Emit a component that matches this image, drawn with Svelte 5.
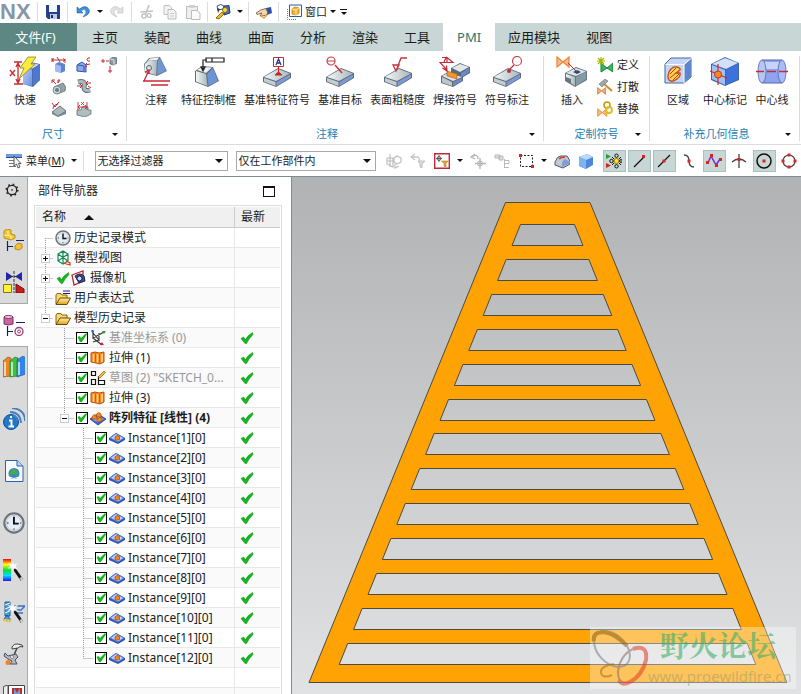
<script>
  // inner markup of every icon, small ones on a 16 grid, big ones on 32
  const slab = '<path d="M2 21L17 12L30 17V22L15 31L2 26Z" fill="#5c6d80"/><path d="M3 21L17 13L29 17.500L15 25Z" fill="url(#metal)"/><path d="M3 22L14.500 26V30L3 25.500Z" fill="#c5cdd0"/><path d="M15.500 26L29 18.500V21.500L15.500 30Z" fill="#7e9ad4"/>'
  const tick = '<path d="M2 8.500L4.500 7L6.500 9.500Q9 5 13.500 2.500L14 4.500Q10 8.500 7.500 13.500H6Z" fill="#12b81c" stroke="#078a16" stroke-width=".5"/>'
  const folder = '<path d="M1 14V5L2 3.500H6L7 5H12V8" fill="#f8d776" stroke="#8a6512"/><path d="M1 14.500L5 8H15.500L12 14.500Z" fill="url(#gold)" stroke="#6b4b0a"/>'
  const clock = '<circle cx="8" cy="8" r="7" fill="#fff" stroke="#6d737b" stroke-width="1.600"/><circle cx="8" cy="8" r="5.500" fill="#e4edf8" stroke="#b5bac2" stroke-width=".6"/><path d="M8 3.500V8.500H11.500" fill="none" stroke="#111" stroke-width="1.400"/><path d="M8 13v-1M3 8h1M12.500 8h.7" stroke="#555"/>'
  const bow = (c) => `<path d="M1 1L7 6L13 1V11L7 6L1 11Z" fill="${c}" fill-opacity=".55" stroke="${c}" stroke-width="1.200"/>`
  const wand = '<path d="M10 8L19 21" stroke="#111" stroke-width="3"/><path d="M17.500 18.500L19.500 21.500" stroke="#ccc" stroke-width="2.400"/><path d="M10 2L11 5.500L15 4L12.500 7.500L15 10L11 9.500L10 13L8.500 9L5 9.500L7.500 7L5 4L9 5Z" fill="#fff" stroke="#ddd" stroke-width=".4"/>'

  const icons = {
    save: '<path d="M1 1H15V15H3L1 13Z" fill="#27408d"/><path d="M4 1H12V8H4Z" fill="#f3f6fb"/><path d="M5 10H12V15H5Z" fill="#bccbe8"/><path d="M6 11H8V14H6Z" fill="#1b2a5c"/>',
    undo: '<path d="M2 3V9H8L6 7Q9 4 11 6.500Q12 9 8 13Q16 10 14 5.500Q11 0 4.500 5Z" fill="#3f8bdc" stroke="#2065ad" stroke-width=".6"/>',
    redo: '<path d="M14 3V9H8L10 7Q7 4 5 6.500Q4 9 8 13Q0 10 2 5.500Q5 0 11.500 5Z" fill="#e2e2e2" stroke="#bcbcbc" stroke-width=".6"/>',
    cut: '<path d="M10 1L6.500 10M1.500 8L14 7" fill="none" stroke="#c3c3c3" stroke-width="1.500"/><circle cx="5" cy="12" r="2.200" fill="none" stroke="#bbb" stroke-width="1.200"/><circle cx="10" cy="11.500" r="2" fill="none" stroke="#bbb" stroke-width="1.200"/>',
    copy: '<path d="M2 1.500H7.500L9.500 3.500V10.500H2Z" fill="#f4f4f4" stroke="#c0c0c0"/><path d="M6 5.500H11.500L14 8V15H6Z" fill="#f4f4f4" stroke="#bbb"/><path d="M8 9.500h4M8 12h4" stroke="#ccc"/>',
    paste: '<path d="M1.500 2.500H12.500V14.500H1.500Z" fill="#efefef" stroke="#bdbdbd"/><path d="M4.500 1H9.500V4H4.500Z" fill="#d0d0d0"/><path d="M6.500 6.500H12L15 9V15.500H6.500Z" fill="#fafafa" stroke="#bbb"/>',
    find: '<path d="M2 2Q6-1 9 2L8 5L3 6Z" fill="#fff" stroke="#2b56a8"/><path d="M9 2L14 1.500L15 9L9 11Z" fill="#3d6fc6" stroke="#1d3d86"/><circle cx="10" cy="6" r="2.500" fill="#ffd843" stroke="#8f6a00"/><path d="M1 14L7 8L9 10L4 15Z" fill="#f1b91e" stroke="#785600" stroke-width=".8"/><path d="M2 4L5 5L3 9Z" fill="#333"/>',
    hand: '<path d="M10 4L15 3L16 9L11 11Z" fill="#2d4fa8"/><path d="M0 9Q5 5 10 4.500L12 9Q10 12 6 12L4 12L6 9L1 10.500Z" fill="#f6d5ac" stroke="#6e5136" stroke-width=".8"/><path d="M5 12L8 14L11 11" fill="none" stroke="#e6a83b" stroke-width="1.500"/>',
    window: '<path d="M1.500 5V15.500H11" fill="none" stroke="#777" stroke-dasharray="1 1"/><path d="M3.500 1H15.500V12.500H3.500Z" fill="#f8fbff" stroke="#2e5ca5"/><path d="M6 5L9 3L13 4V9L10 11L6 10Z" fill="#f8b420" stroke="#9b6500" stroke-width=".6"/><path d="M6 5L10 6V11M10 6L13 4" fill="none" stroke="#fff0b0"/>',

    quick: '<path d="M14 11L21 6L31 8V24L24 31L14 28Z" fill="#4d6ba8"/><path d="M14 12L23 13.500V30L14 28Z" fill="url(#blue)"/><path d="M24 13.500L31 8.500V24L24 30Z" fill="#4d78d0"/><path d="M15 11L21 7L30 8.500L23.500 12.500Z" fill="#cbdaf5"/><path d="M5 6H13M5 28H14M9 7V27M7 11L9 7L11 11M7 23L9 27L11 23M1 14L6 20M6 14L1 20" fill="none" stroke="#c92a30" stroke-width="1.300"/><path d="M19 1H27L22 8H26L10 23L15 12H11Z" fill="#ffeb3b" stroke="#8b8230" stroke-width=".8"/>',
    linear: '<path d="M4 7L8 5L14 7V14L10 16L4 14Z" fill="#5d83cc"/><path d="M4 7L10 9V16L4 14Z" fill="#a2bbf0"/><path d="M1 1V5M14 2V6M1 3H14M3 1.500L1 3L3 4.500M12 1.500L14 3L12 4.500M6 0L9 5" fill="none" stroke="#c92a30"/>',
    angular: '<path d="M1 8L6 5L10 8V15L1 14Z" fill="#8aa9ea" stroke="#2f55ae"/><path d="M2 8L8 9V14" fill="none" stroke="#2f55ae"/><path d="M14 1H12Q10 3 12 4H14M14 7L9 8M11 6L9 8L11 10" fill="none" stroke="#c92a30"/>',
    point: '<path d="M9 2L12 0L16 1V6L13 8L9 7Z" fill="#8e9aa5" stroke="#4f5a65" stroke-width=".7"/><path d="M9 2L13 3V8" fill="none" stroke="#fff" stroke-width=".7"/><path d="M1 3H3V5H1ZM5 4H8M9 9V12M8 13H10V15H8Z" fill="none" stroke="#c92a30"/>',
    cylinder: '<path d="M3 8L12 4Q16 7 14 12L6 15Z" fill="#93a4a9" stroke="#596b72" stroke-width=".7"/><circle cx="6" cy="11" r="4" fill="#c9d5d7" stroke="#596b72" stroke-width=".7"/><circle cx="6" cy="11" r="2" fill="#687b82"/><path d="M1 1L5 5M1 4V1H4M7 1H9L7 4Z" fill="none" stroke="#c92a30"/>',
    curve: '<path d="M2 3Q10 1 8 8Q8 13 14 11" fill="none" stroke="#60727b" stroke-width="5"/><path d="M2 3Q10 1 8 8Q8 13 14 11" fill="none" stroke="#a9babf" stroke-width="3"/><path d="M1 7H6M4 5L6 7L4 9M15 4H10M12 2L10 4L12 6M12 7L15 9" fill="none" stroke="#c92a30"/>',
    chamfer: '<path d="M1 11L9 5L15 10L7 15Z" fill="#aab7bb" stroke="#65747b"/><path d="M1 11L7 15L15 10V13L7 16L1 13Z" fill="#78888f"/><path d="M1 2L4 6L8 1M2 8Q2 4 7 3" fill="none" stroke="#c92a30"/>',
    thickness: '<path d="M1 9H5Q5 5 9 5Q13 5 12 9H15V13L9 16L1 14Z" fill="#b0bdc1" stroke="#62727a" stroke-width=".8"/><path d="M2 1V9M11 1V9M2 6H11M4 4L2 6L4 8M9 4L11 6L9 8M5 1L8 4M8 1L5 4" fill="none" stroke="#c92a30" stroke-width=".9"/>',

    note: '<path d="M4 8L9 2L20 1L27 15L17 20L5 17Z" fill="#677889"/><path d="M5 8L10 4L17 5L16 19L5 16Z" fill="url(#metal)"/><path d="M18 5L20 2L26 14.500L17 19Z" fill="#7197d3"/><path d="M6 7L10 2.500L19 1.500L17 4.500L10 4Z" fill="#edf1f1"/><circle cx="9" cy="12" r="2.500" fill="#d7e5e4" stroke="#526571"/><path d="M9 14L4 25H8M3 25H30M11 29H28M5 16L9 14V18" fill="none" stroke="#cc2730" stroke-width="1.300"/>',
    frame: '<path d="M2 15L9 10L20 11L26 25L15 31L2 26Z" fill="#5b6c7d"/><path d="M3 15L13 18L14.500 30L3 25.500Z" fill="url(#metal)"/><path d="M14 18L20 12L25 25L15.500 30Z" fill="#6d94d5"/><path d="M4 14L9 11L19 11.500L13 17Z" fill="#eef1f1"/><path d="M10 15V4H14M13 2H31V6H13ZM19 2V6M8 11L10 15L12 11Z" fill="none" stroke="#222" stroke-width="1.200"/>',
    datum: slab + '<path d="M12.500 1.500H22.500V10.500H12.500Z" fill="#fff" stroke="#c22c38"/><path d="M15 9L17.500 3L20 9M16 7H19" fill="none" stroke="#352f86" stroke-width="1.300"/><path d="M17.500 11V17M14 19H21L17.500 16Z" fill="#c22" stroke="#c22"/>',
    target: slab + '<path d="M11 9L18 17" stroke="#d32c30" stroke-width="1.500"/><circle cx="7" cy="5" r="4" fill="#fff" stroke="#c94248" stroke-width="1.200"/><path d="M3 5H11" stroke="#c94248"/>',
    rough: slab + '<path d="M11 9H17L14 15ZM14 15L19 2H25" fill="none" stroke="#c3343a" stroke-width="1.300"/>',
    weld: '<path d="M12 12L21 7L31 11V17L21 23L12 18Z" fill="#596b7b"/><path d="M13 12L21 8L30 11L21 16Z" fill="#e2e7e8"/><path d="M22 17L30 12V16L22 22Z" fill="#6b8ac5"/><path d="M2 20L9 16L24 21V25L14 31L2 27Z" fill="#596b7b"/><path d="M3 20L9 17L23 21L14 25Z" fill="#dfe5e6"/><path d="M3 21L13 26V30L3 26.500Z" fill="#bdc7ca"/><path d="M14 26L23 22V25L14 30Z" fill="#6b8ac5"/><path d="M8 15L18 18L18 23L8 20Z" fill="#f79331" stroke="#b65a10" stroke-width=".6"/><path d="M3 1.500H7L5 6M8 6.500V1.500L14 6.500H1L8 14M3.500 12L8 15L7.500 9.500" fill="none" stroke="#c22c38" stroke-width="1.200"/>',
    balloon: slab + '<circle cx="26" cy="5" r="4.500" fill="#fff" stroke="#c94248" stroke-width="1.200"/><path d="M23 9L18 14" stroke="#c22c38" stroke-width="1.300"/><circle cx="18" cy="15" r="2" fill="#c22c38"/>',
    insert: bow('#ee8430') + '<path d="M9 17L20 11L31 15V24L19 31L9 25Z" fill="#67767e"/><path d="M10 17L20 12L30 15.500L20 20Z" fill="#dfe6e7"/><path d="M10 18L19 21V30L15 27V23L10 21Z" fill="url(#metal)"/><path d="M20 21L30 16V23L20 30Z" fill="#849ba5"/><path d="M17 16L21 14L25 16L21 18Z" fill="#234a7c"/><path d="M12 7L21 16" stroke="#c22c38"/>',
    define: '<g transform="translate(3 5)"><path d="M1 1L7 6L13 1V10L7 6L1 10Z" fill="#36b85c" stroke="#19833c"/></g><path d="M4 0V8M0 4H8M1 1L7 7M7 1L1 7" stroke="#a7b900" stroke-width="1.200"/>',
    break: '<g transform="translate(0 8) scale(.65)">' + bow('#e76d1c') + '</g><path d="M6 4L15 12" stroke="#d98a22" stroke-width="2"/><path d="M2 5L8 0L11 2L5 8Z" fill="#9ba7ac" stroke="#68757b" stroke-width=".6"/>',
    replace: '<g transform="translate(0 7) scale(.75)">' + bow('#ec8a1d') + '</g><circle cx="10" cy="4" r="3" fill="none" stroke="#c49a0c" stroke-width="1.600"/><circle cx="12" cy="9" r="3" fill="none" stroke="#e0bb24" stroke-width="1.800"/>',
    region: '<path d="M3 8L9 2H29V21L22 27H3Z" fill="#c5d5f5" stroke="#45669f"/><path d="M22 9L29 2V21L22 27Z" fill="#5e86d0"/><path d="M3.500 8.500H22V27M22 8.500L29 2.500" fill="none" stroke="#fff"/><path d="M7 16Q10 10 15 11Q19 12 18 14L14 17H18Q19 20 15 23Q10 27 7 24Q5 21 7 16Z" fill="#f9d34e" stroke="#c8451f" stroke-width="1.300"/><path d="M8 18L14 12M8 22L14 17M11 24L17 18" stroke="#c43821"/>',
    center: '<path d="M2 8L16 1L30 7V24L16 30L2 24Z" fill="#3e62ae"/><path d="M3 8L16 2L29 7L17 13Z" fill="#d3e0f8"/><path d="M3 9L16 14V29L3 23Z" fill="#a6bff2"/><path d="M17 14L29 8V23L17 29Z" fill="#3b72dd"/><path d="M1 15L18 22M9 8V29" stroke="#d0282c" stroke-width="1.200"/><circle cx="9" cy="18.500" r="3.500" fill="#f7842b" stroke="#b9400b"/>',
    axis: '<path d="M6 4H26V27H6Z" fill="#8fa3ee"/><path d="M6 4H26M6 27H26" stroke="#5467ac"/><path d="M6 6H26V13H6Z" fill="#dfe6ff" opacity=".7"/><ellipse cx="6" cy="15.500" rx="4" ry="11.500" fill="#b7c6f5" stroke="#5265a6" stroke-width=".8"/><ellipse cx="26" cy="15.500" rx="4" ry="11.500" fill="#aabcf7" stroke="#5265a6" stroke-width=".8"/><path d="M0 15.500H8M11 15.500H20M23 15.500H32" stroke="#c22c38" stroke-width="1.400"/>',

    menu: '<path d="M0 1H16V4H0Z" fill="#6e9be6"/><path d="M0 4.500H16" stroke="#2e4f8f"/><path d="M3 7.500H10M3 10.500H10M3 13.500H10" stroke="#777"/><path d="M8 3V13L10.500 11L12 15L14 14L12.500 10.500H15Z" fill="#f5f5f5" stroke="#333" stroke-width=".8"/>',
    geo: '<path d="M1 5H7V14L1 11ZM4 1V14M1 8H8M8 5L11 3L15 5V9L11 11L8 9ZM9 11V15L13 13" fill="none" stroke="#bdbdbd" stroke-width="1.200"/>',
    back: '<path d="M5 1L1 4L5 7M1 4H8Q10 5 9 8" fill="none" stroke="#c6c6c6" stroke-width="1.300"/><path d="M8 8H15L12 11V15L10 14V11Z" fill="#ddd" stroke="#c0c0c0"/>',
    filter: '<path d="M.7.7H15.300V15.300H.7Z" fill="#fff" stroke="#c4283a" stroke-width="1.400"/><path d="M5 2V9M2 5.500H8" stroke="#444" stroke-width=".8"/><circle cx="5" cy="5.500" r="2" fill="none" stroke="#444" stroke-width=".8"/><path d="M7.500 8H14L12 10.500V14L10 13V10.500Z" fill="#eda52d" stroke="#a86a10" stroke-width=".5"/>',
    undoSel: '<path d="M5 1L1 4L5 6M1 4Q8 0 8 6M10 5V16M5 10.500H16" fill="none" stroke="#b3b3b3" stroke-width="1.300"/><circle cx="10" cy="10.500" r="2.500" fill="none" stroke="#b3b3b3"/>',
    tree: '<path d="M1 2H6V5H1ZM5 3H9V7H5Z" fill="#ddd" stroke="#b9b9b9"/><path d="M10.500 6V15M10.500 7.500H15V10.500H10.500M10.500 14.500H15" fill="none" stroke="#b9b9b9"/>',
    marquee: '<path d="M2.500 2.500H14.500V13.500H2.500Z" fill="none" stroke="#222" stroke-dasharray="2 1.500"/><path d="M1 1H4V4H1ZM13 12H16V15H13Z" fill="#d22"/>',
    shell: '<path d="M1 9Q3 3 7 3H13L16 8V11L9 15L1 12Z" fill="#c3cad1" stroke="#4f5863"/><path d="M8 14Q7 8 11 6L15.500 8.500V10.500Z" fill="#7e9ed8"/><path d="M5 6Q7 4 11 4" fill="none" stroke="#d9363b" stroke-width="1.500"/>',
    box: '<path d="M1 4L9 1L15 4V12L8 16L1 13Z" fill="#4b87dc"/><path d="M1 4L9 1L15 4L8 7Z" fill="#b8dcf6"/><path d="M1 4L8 7V16L1 13Z" fill="#7db3ee"/>',
    snap: '<path d="M0 1L5 3.500L0 6Z" fill="#17a431"/><path d="M0 10L5 12.500L0 15Z" fill="#d3221b"/><circle cx="10.500" cy="8" r="2.500" fill="#ffe224" stroke="#9c7300"/><circle cx="10.500" cy="2.700" r="1.700" fill="none" stroke="#111"/><circle cx="10.500" cy="13.300" r="1.700" fill="none" stroke="#111"/><circle cx="5.500" cy="8" r="1.700" fill="none" stroke="#111"/><circle cx="15" cy="8" r="1.400" fill="none" stroke="#111"/><path d="M6 4l2 2M13 10l2 2M15 4l-2 2M6 12l2-2" stroke="#111"/>',
    endpoint: '<path d="M3 14L13 4" stroke="#111" stroke-width="1.300"/><path d="M11 2H14V5H11Z" fill="#d22"/>',
    midpoint: '<path d="M2 14L14 2" stroke="#111" stroke-width="1.300"/><path d="M6.500 6.500H9.500V9.500H6.500Z" fill="#d22"/>',
    control: '<path d="M3 2Q8 2 8 8Q8 14 13 14" fill="none" stroke="#444" stroke-width="1.300"/><path d="M6.500 6.500H9.500V9.500H6.500Z" fill="#d22"/>',
    spline: '<path d="M2 10L5 3L10 12L14 6" fill="none" stroke="#7b2ad0" stroke-width="1.500"/><path d="M0 8H3V11H0ZM4 1H7V4H4ZM9 11H12V14H9ZM13 5H16V8H13Z" fill="#d22"/>',
    cross: '<path d="M8 1V15M1 9Q8 3 15 9" fill="none" stroke="#444" stroke-width="1.300"/><path d="M6.500 5H9.500V8H6.500Z" fill="#d22"/>',
    arc: '<circle cx="8" cy="8" r="7" fill="none" stroke="#111" stroke-width="1.500"/><path d="M6.500 6.500H9.500V9.500H6.500Z" fill="#d22"/>',
    quadrant: '<circle cx="8" cy="8" r="6" fill="none" stroke="#444" stroke-width="1.200"/><path d="M6.500.5H9.500V3.500H6.500ZM6.500 12.500H9.500V15.500H6.500ZM.5 6.500H3.500V9.500H.5ZM12.500 6.500H15.500V9.500H12.500Z" fill="#d22"/>',

    gear: '<circle cx="11" cy="11" r="4.700" fill="none" stroke="#222" stroke-width="1.300"/><circle cx="11" cy="11" r="5.700" fill="none" stroke="#222" stroke-width="1.600" stroke-dasharray="1.600 2.877"/><circle cx="11" cy="11" r=".8"/>',
    assembly: '<path d="M1 2L4 0L8 1V5L12 6V9L8 11L1 9Z" fill="#f7c633" stroke="#ad7c08" stroke-width=".8"/><path d="M1 6L8 7M5 2V7M8 7V10" stroke="#fff2a8"/><path d="M4.500 12V22M4.500 17.500H10M13 11.500H21" stroke="#14206a" stroke-width="1.200"/><path d="M12 17L15 14L19 15V19L16 21L12 20Z" fill="#f7bf32" stroke="#ad7c08" stroke-width=".8"/>',
    constraint: '<path d="M3 1L10 5.500L3 10ZM19 1L12 5.500L19 10Z" fill="#1b25c4"/><path d="M11 0V22M3 5.500H19" stroke="#333" stroke-dasharray="3 1"/><path d="M.5 13.500H8.500V21.500H.5Z" fill="#fff136" stroke="#86740d"/><path d="M13 13L21 18V22H13Z" fill="#c51d1d" stroke="#77100f"/>',
    navigator: '<path d="M1 3V10Q5 12 10 10V3Z" fill="#c866a4" stroke="#833064"/><ellipse cx="5.500" cy="3" rx="4.500" ry="1.500" fill="#f1c6df" stroke="#833064"/><path d="M4.500 12V22M4.500 17.500H10M13 8.500H22" stroke="#14206a" stroke-width="1.200"/><circle cx="16" cy="17.500" r="4" fill="#fff" stroke="#9a3a78" stroke-width="1.300"/><circle cx="16" cy="17.500" r="1.500" fill="none" stroke="#9a3a78"/>',
    books: '<path d="M0 5L5 1L8 2V20L0 21Z" fill="#e98428" stroke="#8c4410" stroke-width=".6"/><path d="M7 5L12 1L15 2V20L7 21Z" fill="#3fc13f" stroke="#17721b" stroke-width=".6"/><path d="M14 4L20 0L23 2V18L14 21Z" fill="#2f86e8" stroke="#124e98" stroke-width=".6"/><path d="M1 6H3V20H1ZM8 6H10V20H8ZM15 6H17V19H15Z" fill="#fff" opacity=".65"/>',
    info: '<circle cx="8" cy="14" r="7.500" fill="#2178c9" stroke="#0b529d"/><path d="M8 8V10M6 12.500H8.500V18M5.500 18.500H11" fill="none" stroke="#fff" stroke-width="2"/><path d="M7 4Q17 4 18 15M9 0Q22 1 22 13M10 7Q14 9 14 13" fill="none" stroke="#467dbd" stroke-width="1.800"/>',
    web: '<path d="M2.500.5H14L20 6V21.500H2.500Z" fill="#f6faff" stroke="#2a62ac"/><path d="M14 .5V6H20" fill="#b9d2f0" stroke="#2a62ac"/><circle cx="11" cy="13.500" r="5.500" fill="#3d81cf"/><path d="M7 14Q8 9 11 9L15 12L13 16L11 13L8 17Z" fill="#48ae42"/><path d="M6 17Q11 20 16 17" stroke="#fff" fill="none"/>',
    history: '<g transform="scale(1.37)">' + clock + '</g>',
    render: '<path d="M0 0H8V22H0Z" fill="url(#rainbow)"/>' + wand,
    studio: '<path d="M2 1H7V15H2ZM1 18L4 14L8 19" fill="#4a9bdc" stroke="#1c6198"/><path d="M2 4L7 2M2 8L7 6M2 12L7 10" stroke="#fff"/><path d="M11 5H22L18 9H11M13 12H20" fill="none" stroke="#3a72bd" stroke-width="1.300"/><path d="M0 18L2 20M4 21V18M8 18L6 21" stroke="#ebb419" stroke-width="1.500"/>' + wand,
    robot: '<path d="M9 4Q11 0 15 1L19 2L20 4L17 3.500L15 5L9 6Z" fill="#eee" stroke="#444"/><path d="M14 5L11 12" stroke="#444" stroke-width="1.500"/><path d="M2 10L5 13L9 12L13 11L15 14L12 17L14 21H7L9 18L5 16L1 13Z" fill="#b3bac6" stroke="#4c5160"/><circle cx="9" cy="14" r="1.500" fill="#fff" stroke="#555" stroke-width=".6"/><circle cx="5" cy="19.500" r="2.500" fill="#ee8425"/>',
    report: '<path d="M.5 1.500L5 0V22H.5Z" fill="#eee" stroke="#555"/><path d="M5.500.5H21.500V22H5.500Z" fill="#fff" stroke="#444"/><path d="M9 3H19V22H9Z" fill="#c22b2b"/><path d="M11 3L14 8L17 3V22H11Z" fill="#5aa8de"/>',

    clock,
    views: '<path d="M3 4L8 1L13 4V11L8 14L3 11ZM3 4L13 11M13 4L3 11M8 1V14" fill="none" stroke="#128a56" stroke-width="1.200"/><path d="M8 13L15 15V13L11 11" fill="none" stroke="#d0461a" stroke-width="1.300"/>',
    tick,
    camera: '<path d="M1 5L12 1V11L3 15Z" fill="#fff" stroke="#c4252c" stroke-width="1.300"/><path d="M4 6Q9 2 13 6L14 11L8 13Z" fill="#3e5190" stroke="#1d2343"/><circle cx="8.500" cy="8.500" r="2.500" fill="#c9dafc" stroke="#101a43"/>',
    expression: folder + '<path d="M8 1H15M8 3.500H15" stroke="#20208a"/>',
    folder,
    csys: '<path d="M3 1V8L14 2M3 8L12 15M3 3L9 10V3M9 10L3 12Z" fill="none" stroke="#333" stroke-width="1.100"/><path d="M1 1H4M2.500 0V3" stroke="#2e5bd0" stroke-width="1.200"/><path d="M12 1L16 1L14 4Z" fill="#1da53a"/><path d="M10 15H14L12 12Z" fill="#d22"/>',
    extrude: '<path d="M1 3L5 2L9 3L14 2V12L10 14L6 13L1 12Z" fill="#f58a1f" stroke="#b8500c"/><path d="M3.500 4V12M7.500 4V12.500M12 4V12" stroke="#ffd98a" stroke-width="1.500"/><path d="M5.500 3.500V12.500M9.500 4V13" stroke="#c95f12"/>',
    sketch: '<path d="M1.500 1.500H5.500V5.500H1.500ZM1.500 9.500H5.500V14.500H1.500ZM8.500 6V14.500H14.500V10.500H9" fill="none" stroke="#111" stroke-width="1.200"/><path d="M8 7L14 1L15.500 2.500L10 8Z" fill="#f2b93b" stroke="#7a4d00" stroke-width=".6"/>',
    pattern: '<path d="M0 9L8 4L16 9L8 15Z" fill="#3c64c9" stroke="#203f96" stroke-width=".8"/><path d="M2 9L8 5.500L14 9L8 12.500Z" fill="#9ab6f4"/><path d="M2 7Q4 3 7 6L7 9L2 9ZM6 5Q8 1 11 4V7L6 7ZM7 10Q9 6 12 8V11L7 12Z" fill="#f08e24" stroke="#a2450b" stroke-width=".7"/>',
    instance: '<path d="M0 8L7 3L16 8V10L9 14L0 10Z" fill="#2c56b8"/><path d="M1 8L7 3.500L15 8L9 12Z" fill="#b9cdf8" stroke="#4a74d6"/><path d="M6 9.500V7Q8 4 10.500 6.500V9.500Q8 11 6 9.500Z" fill="#f0861c" stroke="#a2450b" stroke-width=".7"/>',
  }

  const tabs = ['主页', '装配', '曲线', '曲面', '分析', '渲染', '工具', 'PMI', '应用模块', '视图']
  const dims = ['linear', 'angular', 'point', 'cylinder', 'curve', '', 'chamfer', 'thickness']
  const notes = [
    ['note', '注释'],
    ['frame', '特征控制框'],
    ['datum', '基准特征符号'],
    ['target', '基准目标'],
    ['rough', '表面粗糙度'],
    ['weld', '焊接符号'],
    ['balloon', '符号标注'],
  ]
  const symbols = [['define', '定义'], ['break', '打散'], ['replace', '替换']]
  const geometry = [['region', '区域'], ['center', '中心标记'], ['axis', '中心线']]

  const snaps = ['snap', 'endpoint', 'midpoint', 'control', 'spline', 'cross', 'arc', 'quadrant']
  const snapsOn = ['snap', 'endpoint', 'midpoint', 'spline', 'arc']

  const resources = ['gear', 'assembly', 'constraint', 'navigator', 'books', 'info', 'web', 'history', 'render', 'studio', 'robot', 'report']

  let rows = [
    { level: 0, icon: 'clock', text: '历史记录模式', first: true },
    { level: 0, icon: 'views', text: '模型视图', toggle: '+' },
    { level: 0, icon: 'camera', text: '摄像机', toggle: '+', mark: true },
    { level: 0, icon: 'expression', text: '用户表达式' },
    { level: 0, icon: 'folder', text: '模型历史记录', toggle: '-', last: true },
    { level: 1, icon: 'csys', text: '基准坐标系 (0)', dim: true },
    { level: 1, icon: 'extrude', text: '拉伸 (1)' },
    { level: 1, icon: 'sketch', text: '草图 (2) "SKETCH_0...', dim: true },
    { level: 1, icon: 'extrude', text: '拉伸 (3)' },
    { level: 1, icon: 'pattern', text: '阵列特征 [线性] (4)', toggle: '-', bold: true, last: true },
  ]
  for (let i = 1; i <= 12; i++) {
    rows.push({ level: 2, icon: 'instance', text: `Instance[${i}][0]`, last: i == 12 })
  }

  const guideWidths = [17, 38, 57]

  // ladder openings, each one lower and wider than the one above
  const holes = Array.from({ length: 13 }, (_, i) => {
    const y = Math.round(224 + i * 34.9) + 0.5
    const l = 512 - i * 14.4
    const r = 583 + i * 14.4
    return `M${l + 8.5} ${y}H${r - 8.5}L${r} ${y + 21}H${l}Z`
  })
</script>

{#snippet icon(name, size = 16)}
  <svg class="icon" width={size} height={size} viewBox="0 0 {size} {size}" aria-hidden="true">{@html icons[name]}</svg>
{/snippet}

{#snippet big(name, label)}
  <button class="big">{@render icon(name, 32)}<span>{label}</span></button>
{/snippet}

<svg class="defs" width="0" height="0">
  <defs>
    <linearGradient id="metal"><stop stop-color="#f5f7f7" /><stop offset="1" stop-color="#a9b7bb" /></linearGradient>
    <linearGradient id="blue" x2="1" y2="1"><stop stop-color="#b9cdf6" /><stop offset="1" stop-color="#6b90e2" /></linearGradient>
    <linearGradient id="gold" x2="0" y2="1"><stop stop-color="#fff0a5" /><stop offset="1" stop-color="#e2a01c" /></linearGradient>
    <linearGradient id="rainbow" x2="0" y2="1">
      <stop stop-color="#f00" /><stop offset=".25" stop-color="#ff0" /><stop offset=".5" stop-color="#1d3" />
      <stop offset=".75" stop-color="#0df" /><stop offset="1" stop-color="#21f" />
    </linearGradient>
  </defs>
</svg>

<div class="app">
  <header class="title">
    <strong>NX</strong>
    <i class="sep"></i>
    <button class="tool" aria-label="保存">{@render icon('save')}</button>
    <i class="sep"></i>
    <button class="tool" aria-label="撤销">{@render icon('undo')}</button>
    <button class="caret" aria-label="撤销列表"></button>
    <button class="tool" aria-label="重做">{@render icon('redo')}</button>
    <i class="sep"></i>
    <button class="tool" aria-label="剪切">{@render icon('cut')}</button>
    <button class="tool" aria-label="复制">{@render icon('copy')}</button>
    <button class="tool" aria-label="粘贴">{@render icon('paste')}</button>
    <i class="sep"></i>
    <button class="tool" aria-label="命令查找器">{@render icon('find')}</button>
    <button class="caret" aria-label="更多"></button>
    <i class="sep"></i>
    <button class="tool" aria-label="触控模式">{@render icon('hand')}</button>
    <i class="sep"></i>
    <button class="window">{@render icon('window')}窗口</button>
    <button class="caret" aria-label="窗口列表"></button>
    <button class="caret bar" aria-label="工具条选项"></button>
  </header>

  <nav class="tabs">
    <button class="file">文件(F)</button>
    {#each tabs as tab}
      <button class:active={tab == 'PMI'}>{tab}</button>
    {/each}
  </nav>

  <div class="ribbon">
    <section class="dimension">
      <div class="items">
        {@render big('quick', '快速')}
        <div class="grid">
          {#each dims as name}
            {#if name}
              <button aria-label={name}>{@render icon(name)}</button>
            {:else}
              <span></span>
            {/if}
          {/each}
        </div>
      </div>
      <footer>尺寸<button class="caret" aria-label="尺寸选项"></button></footer>
    </section>
    <section class="annotation">
      <div class="items">
        {#each notes as [name, label]}
          {@render big(name, label)}
        {/each}
      </div>
      <footer>注释<button class="caret" aria-label="注释选项"></button></footer>
    </section>
    <section class="custom">
      <div class="items">
        {@render big('insert', '插入')}
        <div class="list">
          {#each symbols as [name, label]}
            <button>{@render icon(name)}{label}</button>
          {/each}
        </div>
      </div>
      <footer>定制符号<button class="caret" aria-label="定制符号选项"></button></footer>
    </section>
    <section class="extra">
      <div class="items">
        {#each geometry as [name, label]}
          {@render big(name, label)}
        {/each}
      </div>
      <footer>补充几何信息<button class="caret" aria-label="几何选项"></button></footer>
    </section>
  </div>

  <div class="selection">
    <button class="menu">{@render icon('menu')}<span>菜单(<u>M</u>)</span></button>
    <button class="caret" aria-label="菜单列表"></button>
    <i class="sep"></i>
    <label class="pick filter">
      <select aria-label="选择过滤器"><option>无选择过滤器</option></select>
    </label>
    <label class="pick scope">
      <select aria-label="选择范围"><option>仅在工作部件内</option></select>
    </label>
    <button class="tool" aria-label="几何">{@render icon('geo')}</button>
    <button class="tool" aria-label="返回">{@render icon('back')}</button>
    <button class="tool" aria-label="过滤">{@render icon('filter')}</button>
    <button class="caret" aria-label="过滤列表"></button>
    <button class="tool" aria-label="撤销选择">{@render icon('undoSel')}</button>
    <button class="tool" aria-label="层级">{@render icon('tree')}</button>
    <button class="tool" aria-label="框选">{@render icon('marquee')}</button>
    <button class="caret" aria-label="框选列表"></button>
    <button class="tool" aria-label="面">{@render icon('shell')}</button>
    <button class="tool" aria-label="体">{@render icon('box')}</button>
    <div class="snaps">
      {#each snaps as name}
        <button class:on={snapsOn.includes(name)} aria-label={name}>{@render icon(name)}</button>
      {/each}
    </div>
  </div>

  <main>
    <nav class="resources">
      {#each resources as name}
        <button class={name} class:active={name == 'navigator'} aria-label={name}>{@render icon(name, 22)}</button>
      {/each}
    </nav>

    <aside>
      <h2>部件导航器<button aria-label="最大化"></button></h2>
      <div class="frame">
        <table>
          <thead>
            <tr><th>名称<span class="sort"></span></th><th class="state">最新</th></tr>
          </thead>
          <tbody>
            {#each rows as row}
              {@const x = 9.5 + row.level * 19}
              <tr>
                <td>
                  <div class="node" class:dim={row.dim} class:bold={row.bold}>
                    <svg class="guide" width={guideWidths[row.level]} height="19" aria-hidden="true">
                      <path d="M{x} {row.first ? 10 : 0}V{row.last ? 10 : 19}M{x} 10.5H{guideWidths[row.level]}" stroke="#999" stroke-dasharray="1 1" />
                      {#if row.toggle}
                        <rect x={x - 4} y="6.500" width="8" height="8" fill="#fff" stroke="#ccc" />
                        <path d="M{x - 2.5} 10.5h5{row.toggle == '+' ? 'm-2.5 -2.5v5' : ''}" stroke="#111" />
                      {/if}
                    </svg>
                    {#if row.level > 0}
                      <input type="checkbox" checked aria-label={row.text} />
                    {/if}
                    {#if row.mark}<span class="mark">{@render icon('tick')}</span>{/if}
                    {@render icon(row.icon)}
                    <span class="label">{row.text}</span>
                  </div>
                </td>
                <td class="state">{#if row.level > 0}{@render icon('tick')}{/if}</td>
              </tr>
            {/each}
            <tr><td></td><td></td></tr>
            <tr><td></td><td></td></tr>
          </tbody>
        </table>
      </div>
    </aside>

    <div class="canvas">
      <svg viewBox="292 177 509 517" preserveAspectRatio="xMinYMin meet">
        <path
          d="M505.500 202.500H590L787 682.500H309Z{holes.join('')}"
          fill="#ffa305" fill-rule="evenodd" stroke="#4e4a42"
        />
        <rect x="590" y="627" width="206" height="62" fill="#fff" opacity=".35" />
        <g fill="none" opacity=".55">
          <ellipse cx="612" cy="649" rx="14" ry="21" transform="rotate(-45 612 649)" stroke="#6f7f8d" stroke-width="2" />
          <path d="M594 641Q592 632 604 632Q616 634 627 646" stroke="#8c5d10" stroke-width="4" />
          <path d="M633 649Q648 644 646 660Q642 676 630 682Q622 686 619 680" stroke="#e03a2a" stroke-width="4" />
          <path d="M633 649Q620 655 618 672Q618 681 623 683" stroke="#8a6a6a" stroke-width="2" />
          <path d="M614 664Q600 666 601 673Q603 679 612 675" stroke="#a06a20" stroke-width="2" />
        </g>
        <text class="brand" x="660" y="657">野火论坛</text>
        <text class="site" x="648" y="682">www.proewildfire.cn</text>
      </svg>
    </div>
  </main>
</div>

<style>
  :global(body) {
    margin: 0;
    overflow: hidden;
  }
  .app {
    display: flex;
    flex-direction: column;
    height: 100vh;
    background: #fff;
    color: #1c1c1c;
    font: 11px/16px "Noto Sans", "Noto Sans CJK SC", sans-serif;
  }
  .defs {
    position: absolute;
  }
  button {
    display: flex;
    align-items: center;
    justify-content: center;
    flex: none;
    padding: 0;
    border: 0;
    background: none;
    color: inherit;
    font: inherit;
    white-space: nowrap;
  }
  .icon {
    display: block;
    flex: none;
  }
  .tool {
    width: 24px;
    height: 22px;
  }
  .caret {
    width: 12px;
    height: 16px;
  }
  .caret::before {
    content: "";
    border: 3px solid transparent;
    border-top-color: #111;
    border-bottom-width: 0;
  }
  .sep {
    flex: none;
    width: 1px;
    height: 20px;
    margin: 0 3px;
    background: #dcdcdc;
  }

  .title {
    display: flex;
    align-items: center;
    height: 23px;
    flex: none;
  }
  .title strong {
    width: 34px;
    color: #8797a6;
    font: bold 22px/20px "Liberation Sans", sans-serif;
  }
  .title .tool {
    width: 23px;
  }
  .title .caret {
    width: 11px;
  }
  .title .window {
    gap: 3px;
    padding-left: 4px;
  }
  .bar {
    flex-direction: column;
    gap: 2px;
  }
  .bar::after {
    content: "";
    order: -1;
    width: 7px;
    height: 1px;
    background: #111;
  }

  .tabs {
    display: flex;
    flex: none;
    height: 28px;
    background: #c8d7d5;
    font-size: 13px;
  }
  .tabs button {
    min-width: 52px;
    padding: 0 13px;
  }
  .tabs .file {
    width: 77px;
    margin-right: 2px;
    padding-right: 19px;
    background: #5c8782;
    color: #fff;
  }
  .tabs .active {
    background: #fff;
    color: #24786f;
  }

  .ribbon {
    display: flex;
    flex: none;
    padding-top: 5px;
    border-bottom: 1px solid #dcdcdc;
  }
  .ribbon section {
    display: flex;
    flex-direction: column;
    margin-bottom: 3px;
    border-right: 1px solid #dcdcdc;
  }
  .items {
    display: flex;
    height: 70px;
  }
  .big {
    flex-direction: column;
    justify-content: flex-start;
    min-width: 42px;
    padding: 0 4px;
    gap: 4px;
  }
  .grid {
    display: grid;
    grid-template-columns: repeat(3, 25px);
    grid-auto-rows: 22px;
    margin-top: -2px;
  }
  .list button {
    height: 22px;
    gap: 4px;
  }
  .list {
    margin-top: -2px;
  }
  .ribbon footer {
    position: relative;
    color: #2380b0;
    text-align: center;
    line-height: 15px;
  }
  .ribbon footer .caret {
    position: absolute;
    right: 5px;
    top: 0;
  }
  .dimension .items {
    padding: 0 5px 0 4px;
  }
  .dimension footer {
    padding-right: 20px;
  }
  .annotation .items {
    padding: 0 10px 0 8px;
  }
  .annotation footer {
    padding-right: 16px;
  }
  .custom .items {
    padding: 0 10px 0 7px;
    gap: 4px;
  }
  .extra .items {
    padding: 0 6px 0 7px;
  }
  .extra footer {
    padding-right: 16px;
  }

  .selection {
    display: flex;
    align-items: center;
    flex: none;
    height: 31px;
    padding-left: 6px;
    border-bottom: 1px solid #7f8c92;
    overflow: hidden;
  }
  .menu {
    gap: 4px;
    margin-right: 3px;
  }
  .pick {
    position: relative;
    flex: none;
    height: 20px;
    margin-left: 8px;
  }
  .pick::after {
    content: "";
    position: absolute;
    right: 5px;
    top: 8px;
    border: 4px solid transparent;
    border-top-color: #111;
    border-bottom: 0;
    pointer-events: none;
  }
  .filter {
    width: 133px;
  }
  .scope {
    width: 140px;
    margin-right: 6px;
  }
  select {
    appearance: none;
    width: 100%;
    height: 20px;
    padding: 0 2px;
    border: 1px solid #a8a8a8;
    border-radius: 0;
    background: #fff;
    color: inherit;
    font: inherit;
  }
  .snaps {
    display: flex;
    gap: 2px;
    margin-left: 5px;
  }
  .snaps button {
    box-sizing: border-box;
    width: 23px;
    height: 22px;
  }
  .snaps .on {
    border: 1px solid #a5c2be;
    background: #c8d7d5;
  }

  main {
    display: flex;
    flex: 1;
    min-height: 0;
  }
  .resources {
    display: flex;
    flex-direction: column;
    flex: none;
    width: 28px;
    overflow: hidden;
    background: #dadada;
  }
  .resources button {
    height: 42px;
    border-right: 1px solid #a8a8a8;
  }
  .resources .gear {
    padding-bottom: 16px;
    padding-right: 4px;
  }
  .resources .active {
    height: 44px;
    border: solid #a8a8a8;
    border-width: 1px 0;
    background: #fff;
  }
  .resources .books {
    height: 46px;
    padding-bottom: 6px;
  }
  .resources .info,
  .resources .web,
  .resources .history {
    height: 52px;
  }
  aside {
    display: flex;
    flex-direction: column;
    flex: none;
    width: 263px;
    border-right: 1px solid #7f8c92;
    font-size: 12px;
  }
  h2 {
    display: flex;
    justify-content: space-between;
    align-items: center;
    flex: none;
    height: 28px;
    margin: 0;
    padding: 0 16px 0 10px;
    font-size: 12px;
    font-weight: normal;
  }
  h2 button {
    width: 12px;
    height: 11px;
    border: 1px solid #111;
    border-top-width: 2px;
    box-sizing: border-box;
  }
  .frame {
    flex: 1;
    min-height: 0;
    margin: 0 9px 0 6px;
    padding: 1px 1px 0;
    border: 1px solid #dcdcdc;
    border-bottom: 0;
    overflow: hidden;
  }
  table {
    width: 100%;
    border-spacing: 0;
    table-layout: fixed;
  }
  th {
    height: 20px;
    padding: 0 6px;
    border-bottom: 1px solid #ccc;
    border-right: 1px solid #ccc;
    background: #f0f0f0;
    font-weight: normal;
    text-align: left;
  }
  th.state {
    width: 33px;
    border-right: 0;
  }
  .sort {
    display: inline-block;
    margin-left: 18px;
    border: 5px solid transparent;
    border-top: 0;
    border-bottom-color: #111;
    vertical-align: 1px;
  }
  td {
    height: 19px;
    padding: 0;
    border-bottom: 1px solid #e8e8e8;
  }
  td:first-child {
    border-right: 1px solid #e8e8e8;
  }
  td.state {
    padding-left: 4px;
  }
  tbody tr:nth-child(even) {
    background: #fafafa;
  }
  .node {
    display: flex;
    align-items: center;
    gap: 2px;
    height: 19px;
    white-space: nowrap;
  }
  .label {
    margin-left: 1px;
  }
  .mark {
    margin-right: -2px;
  }
  .guide {
    flex: none;
    fill: none;
  }
  .dim {
    color: #999;
  }
  .bold {
    font-weight: bold;
  }
  input {
    appearance: none;
    flex: none;
    box-sizing: border-box;
    width: 12px;
    height: 12px;
    margin: 0;
    border: 1px solid #000;
    background: #fff;
  }
  input:checked::before {
    content: "";
    display: block;
    height: 10px;
    background: #12b81c;
    clip-path: polygon(5% 45%, 25% 35%, 40% 55%, 90% 5%, 100% 20%, 48% 95%, 30% 95%);
  }

  .canvas {
    flex: 1;
    min-width: 0;
    background: linear-gradient(#b1b2b4, #e1e2e3);
  }
  .canvas svg {
    display: block;
    width: 100%;
    height: 100%;
  }
  .brand {
    fill: #3fb06a;
    opacity: .6;
    font: bold 29px "Noto Serif CJK SC", "Noto Sans CJK SC", sans-serif;
  }
  .site {
    fill: #8f9a68;
    opacity: .5;
    font: 15px "Open Sans", sans-serif;
  }
</style>
